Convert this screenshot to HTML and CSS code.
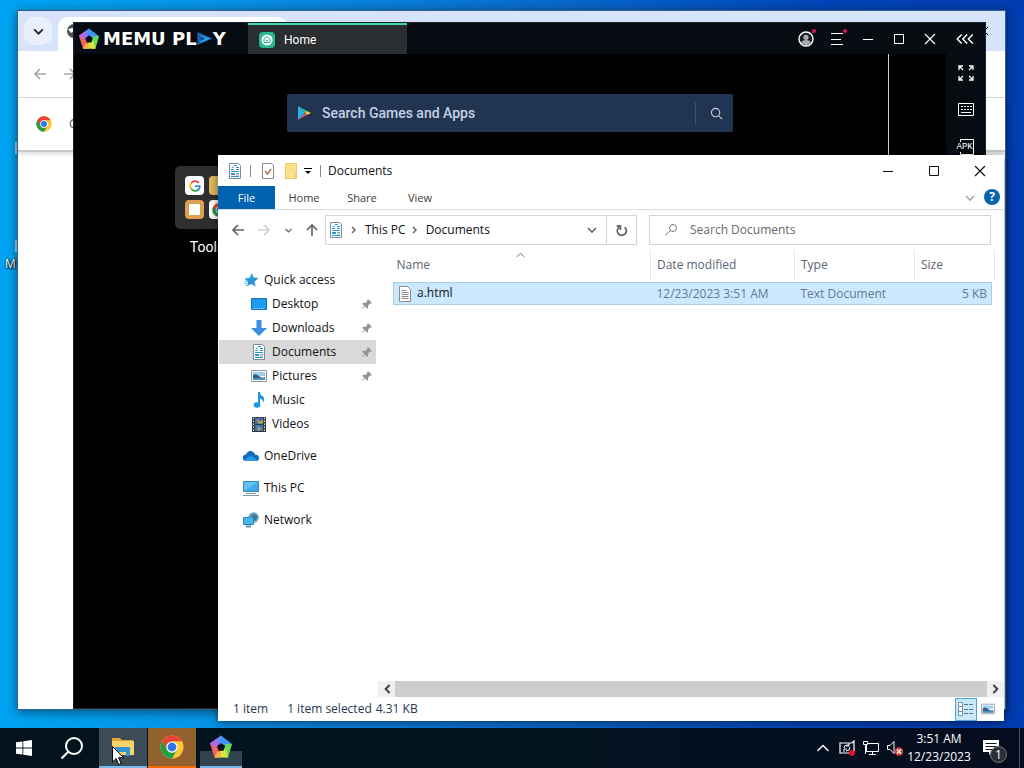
FILE: index.html
```html
<!DOCTYPE html>
<html lang="en">
<head>
    <meta charset="UTF-8">
    <meta name="viewport" content="width=device-width, initial-scale=1.0">
    <title>Desktop</title>
    <link rel="stylesheet" href="styles.css">
</head>
<body>

<!-- Shared icons -->
<svg class="icon-defs" aria-hidden="true">
    <symbol id="i-close" viewBox="0 0 12 12"><path d="M1 1l10 10M11 1L1 11" fill="none" stroke="currentColor" stroke-width="1.2"/></symbol>
    <symbol id="i-max" viewBox="0 0 12 12"><path d="M1.5 1.5h9v9h-9z" fill="none" stroke="currentColor"/></symbol>
    <symbol id="i-min" viewBox="0 0 12 12"><path d="M1 6.500h10" fill="none" stroke="currentColor"/></symbol>
    <symbol id="i-down" viewBox="0 0 12 12"><path d="M2 4l4 4 4-4" fill="none" stroke="currentColor" stroke-width="1.600"/></symbol>
    <symbol id="i-right" viewBox="0 0 12 12"><path d="M4 3l3 3-3 3" fill="none" stroke="currentColor" stroke-width="1.500"/></symbol>
    <symbol id="i-arrow" viewBox="0 0 14 14"><path d="M13 7H2M7 2L2 7l5 5" fill="none" stroke="currentColor" stroke-width="1.700"/></symbol>
    <symbol id="i-search" viewBox="0 0 16 16"><path d="M7.500 8.500L2 13.500" fill="none" stroke="currentColor"/><circle cx="10" cy="6" r="3.500" fill="none" stroke="currentColor"/></symbol>
    <symbol id="i-chrome" viewBox="0 0 24 24">
        <circle cx="12" cy="12" r="11.500" fill="#fcc934"/>
        <path d="M2 6.300L7 15l5-3V6.500z" fill="#1e9e4a"/>
        <path d="M2 6.300A11.500 11.500 0 0 1 22 6.300H12A5.600 5.600 0 0 0 6.800 14.500z" fill="#ea4335"/>
        <path d="M2 6.300L7 15a5.600 5.600 0 0 0 9.800 0L12 23.500A11.500 11.500 0 0 1 2 6.300z" fill="#1e9e4a"/>
        <circle cx="12" cy="12" r="5.600" fill="#fff"/>
        <circle cx="12" cy="12" r="4.400" fill="#2a76e8"/>
    </symbol>
    <symbol id="i-memu" viewBox="0 0 24 24">
        <path d="M12 .5L1 8.500l6.500 4L15 7z" fill="#a07af5"/>
        <path d="M12 .5l11 8.500-5 3.500L8 7z" fill="#3f96f5"/>
        <path d="M23 9l-4 13.500h-3L14 15l3-6z" fill="#6bdc52"/>
        <path d="M19 22.500H5.500L8 16l9-1.500z" fill="#d9e63e"/>
        <path d="M5.500 22.500L1 8.500l6.500 1L11 17z" fill="#f0655e"/>
        <path d="M5.500 22.500l3-6 4 1-1 5z" fill="#f5b34a"/>
        <path d="M1 8.500L7 4l3 4-3 5z" fill="#b467e6"/>
        <path d="M12 8l4 3-1.500 4.800h-5L8 11z" fill="#0b1118"/>
    </symbol>
    <symbol id="i-doc" viewBox="0 0 16 16">
        <path d="M2.500.5h9l2 2v13h-11z" fill="#fff" stroke="#7b8c98"/>
        <path d="M7 2.500h3M4 6.500h3M9 4.500h3M9 6.500h3M4 8.500h8M4 13.500h8" stroke="#2a94cf"/>
        <path d="M4 10h4v2H4z" fill="#2a94cf"/>
        <path d="M9 10.500h3M9 12h3" stroke="#7ea8bf"/>
        <path d="M4.500 5l2-2v2z" fill="#2a94cf"/>
    </symbol>
    <symbol id="i-pic" viewBox="0 0 16 16">
        <path d="M.5 2.500h15v11H.5z" fill="#fff" stroke="#909aa3"/>
        <path d="M2 4h12v4H2z" fill="#9dcff2"/>
        <path d="M2 7q3-2 6 1t6 1v3H2z" fill="#345d80"/>
        <path d="M2 10h12v2H2z" fill="#4a90c0"/>
    </symbol>
    <symbol id="i-pin" viewBox="0 0 12 12">
        <path d="M7 1l4 4-1 .8-1-.2-2 2.200.2 2.200-1 .8L4 8.500 1.500 11 1 10.500 3.500 8 1.200 5.800l.8-1 2.200.2 2.200-2L6.200 2z" fill="#8e969e"/>
    </symbol>
</svg>

<div class="desktop">

    <div class="shortcut">
        <span class="shortcut-art"></span>
        <span class="shortcut-art lower"></span>
        <span class="shortcut-name">MEmu</span>
    </div>

    <!-- Browser -->
    <section class="window browser" aria-label="Browser">
        <div class="browser-tabs">
            <button class="tab-search" aria-label="Search tabs"><svg><use href="#i-down"/></svg></button>
            <div class="browser-tab">
                <svg class="globe" viewBox="0 0 16 16"><circle cx="8" cy="8" r="7" fill="#4a4f54"/><path d="M2 6l5-1 1 3-3 2zM8 2l4 2-2 2zM8 10l4-1-2 4z" fill="#fff"/></svg>
            </div>
            <button class="browser-close" aria-label="Close"><svg><use href="#i-close"/></svg></button>
        </div>
        <div class="browser-bar">
            <button aria-label="Back"><svg><use href="#i-arrow"/></svg></button>
            <button aria-label="Forward"><svg class="flip"><use href="#i-arrow"/></svg></button>
        </div>
        <div class="browser-info">
            <svg><use href="#i-chrome"/></svg>
            <span>Google Chrome</span>
        </div>
        <div class="browser-page"></div>
    </section>

    <!-- Emulator -->
    <section class="window memu" aria-label="MEmu Play">
        <header class="memu-top">
            <div class="memu-brand">
                <svg class="memu-mark"><use href="#i-memu"/></svg>
                <span class="memu-name">MEMU PL<svg class="memu-a" viewBox="0 0 14 12"><path d="M0 0l14 6-14 6z" fill="#1763b8"/><path d="M3 3l9 3-9 4z" fill="#28a3e5"/><path d="M3 4l4 2-4 2z" fill="#0c3b7a"/></svg>Y</span>
            </div>
            <button class="memu-tab">
                <svg viewBox="0 0 16 16"><rect width="16" height="16" rx="4" fill="#28b791"/><circle cx="8" cy="8" r="5.600" fill="#fff"/><path d="M8 4.500l3 2.500v3.500H5V7z" fill="none" stroke="#28b791"/><circle cx="8" cy="8.500" r="1" fill="#28b791"/></svg>
                Home
            </button>
            <div class="memu-tools">
                <button class="dot" aria-label="Account"><svg viewBox="0 0 16 16"><circle cx="8" cy="8" r="7" fill="#1b2027" stroke="#fff" stroke-width="1.400"/><circle cx="8" cy="6.300" r="2.600" fill="#a9adb2"/><path d="M3 12q1-3 5-3t5 3q-5 4-10 0z" fill="#a9adb2"/></svg></button>
                <button class="dot" aria-label="Menu"><svg viewBox="0 0 16 16"><path d="M2 2.500h12M2 8.500h10M2 13.500h12" stroke="#fff"/></svg></button>
                <button aria-label="Minimize"><svg class="small"><use href="#i-min"/></svg></button>
                <button aria-label="Maximize"><svg class="small"><use href="#i-max"/></svg></button>
                <button aria-label="Close"><svg class="small"><use href="#i-close"/></svg></button>
            </div>
            <button class="memu-collapse" aria-label="Collapse"><svg viewBox="0 0 18 12"><path d="M6 2L2 6l4 4M11 2L7 6l4 4M16 2l-4 4 4 4" fill="none" stroke="#fff" stroke-width="1.300"/></svg></button>
        </header>
        <div class="memu-body">
            <div class="memu-screen">
                <label class="game-search">
                    <svg class="play" viewBox="0 0 14 16"><path d="M1 1v14l7-7z" fill="#20b8ea"/><path d="M1 1l9 5-2 2z" fill="#35c08c"/><path d="M10 6l4 2-4 2-2-2z" fill="#fbc62f"/><path d="M1 15l9-5-2-2z" fill="#e84b67"/></svg>
                    <input type="text" placeholder="Search Games and Apps" aria-label="Search Games and Apps">
                    <span class="game-rule"></span>
                    <svg class="lens" viewBox="0 0 14 14"><circle cx="6" cy="6" r="4.500" fill="none" stroke="#c3cddb" stroke-width="1.200"/><path d="M9.500 9.500L13 13" stroke="#c3cddb" stroke-width="1.200"/></svg>
                </label>
                <div class="folder">
                    <div class="folder-box">
                        <span class="app google"><svg viewBox="0 0 16 16"><path d="M12.500 4.500A5.500 5.500 0 0 0 3.500 5" stroke="#ea4335" stroke-width="2" fill="none"/><path d="M3.500 5a5.500 5.500 0 0 0 0 6" stroke="#fbbc05" stroke-width="2" fill="none"/><path d="M3.500 11a5.500 5.500 0 0 0 8.500 1" stroke="#34a853" stroke-width="2" fill="none"/><path d="M8 8h5.500q0 3-2 4.500" stroke="#4285f4" stroke-width="2" fill="none"/></svg></span>
                        <span class="app yellow"></span>
                        <span class="app orange"></span>
                        <span class="app"><svg><use href="#i-chrome"/></svg></span>
                    </div>
                    <span class="folder-name">Tools</span>
                </div>
            </div>
            <aside class="memu-rail">
                <button aria-label="Full screen"><svg viewBox="0 0 18 18"><path d="M2 6V2h4M2 2l4 4M12 2h4v4M16 2l-4 4M2 12v4h4M2 16l4-4M16 12v4h-4M16 16l-4-4" fill="none" stroke="#fff" stroke-width="1.300"/></svg></button>
                <button aria-label="Key mapping"><svg viewBox="0 0 18 18"><path d="M1.500 2.500h15v12h-15z" fill="none" stroke="#fff"/><path d="M4 5.500h11M4 8.500h11" stroke="#fff" stroke-dasharray="2 1"/><path d="M4 11.500h10" stroke="#fff"/></svg></button>
                <button aria-label="Install APK"><svg viewBox="0 0 18 18"><path d="M3.500 4V1.500h13v15H3.500V14" fill="none" stroke="#fff"/></svg><span class="apk">APK</span></button>
            </aside>
        </div>
    </section>

    <!-- File Explorer -->
    <section class="window explorer" aria-label="Documents">
        <header class="title-bar">
            <svg class="ico"><use href="#i-doc"/></svg>
            <span class="bar-rule"></span>
            <svg class="ico" viewBox="0 0 16 16"><path d="M2.500.5h9l2 2v13h-11z" fill="#fdfdfd" stroke="#8a8a8a"/><path d="M5 8l2.500 3L11 6" fill="none" stroke="#b0764e" stroke-width="1.500"/></svg>
            <svg class="ico" viewBox="0 0 16 16"><path d="M2 0h12v15H2z" fill="#fbe08c"/><path d="M12 11h2v4h-2z" fill="#f0c95a"/><path d="M2.500.5h11v15h-11z" fill="none" stroke="#eccb6d"/></svg>
            <svg class="quick-more" viewBox="0 0 8 8"><path d="M0 1.500h8" stroke="#000"/><path d="M1 4h6L4 7z"/></svg>
            <span class="bar-rule last"></span>
            <h1>Documents</h1>
            <div class="caption-buttons">
                <button aria-label="Minimize"><svg><use href="#i-min"/></svg></button>
                <button aria-label="Maximize"><svg><use href="#i-max"/></svg></button>
                <button aria-label="Close"><svg><use href="#i-close"/></svg></button>
            </div>
        </header>

        <nav class="ribbon">
            <button class="file">File</button>
            <button>Home</button>
            <button>Share</button>
            <button>View</button>
            <button class="expand" aria-label="Expand the ribbon"><svg><use href="#i-down"/></svg></button>
            <button class="help" aria-label="Help">?</button>
        </nav>

        <div class="nav-row">
            <div class="nav-buttons">
                <button aria-label="Back"><svg><use href="#i-arrow"/></svg></button>
                <button class="off" aria-label="Forward"><svg class="flip"><use href="#i-arrow"/></svg></button>
                <button class="recent" aria-label="Recent locations"><svg><use href="#i-down"/></svg></button>
                <button aria-label="Up"><svg class="up"><use href="#i-arrow"/></svg></button>
            </div>
            <div class="address">
                <svg class="ico"><use href="#i-doc"/></svg>
                <svg class="crumb"><use href="#i-right"/></svg>
                <a href="#">This PC</a>
                <svg class="crumb"><use href="#i-right"/></svg>
                <a href="#">Documents</a>
                <button class="address-down" aria-label="Previous locations"><svg><use href="#i-down"/></svg></button>
                <button class="refresh" aria-label="Refresh"><svg viewBox="0 0 12 12"><path d="M9 3A4.200 4.200 0 1 1 4 2.700M1.500 1.800H5V5.500" fill="none" stroke="#666" stroke-width="1.600"/></svg></button>
            </div>
            <label class="search-box">
                <svg><use href="#i-search"/></svg>
                <input type="text" placeholder="Search Documents" aria-label="Search Documents">
            </label>
        </div>

        <div class="content">
            <nav class="sidebar">
                <a href="#" class="root"><svg viewBox="0 0 16 16"><path d="M9 1l1.500 4.500 5 .5-4 3.500 1 5L8.500 12 4 14l1-4-3.500-3.500 5-.5z" fill="#2a94dc"/><path d="M1 9l3 1M1 12l3-1M2 14l3-2" stroke="#7cc0ea"/></svg>Quick access</a>
                <a href="#"><svg viewBox="0 0 16 16"><path d="M.5 2.500h15v11H.5z" fill="#1d9bf0" stroke="#1377bd"/><path d="M2 12.500h12" stroke="#9bd3f8" stroke-dasharray="1 1"/></svg>Desktop<svg class="pin"><use href="#i-pin"/></svg></a>
                <a href="#"><svg viewBox="0 0 16 16"><path d="M5.500 0h5v8H16l-8 8-8-8h5.500z" fill="#3a8ee0"/></svg>Downloads<svg class="pin"><use href="#i-pin"/></svg></a>
                <a href="#" class="selected"><svg><use href="#i-doc"/></svg>Documents<svg class="pin"><use href="#i-pin"/></svg></a>
                <a href="#"><svg><use href="#i-pic"/></svg>Pictures<svg class="pin"><use href="#i-pin"/></svg></a>
                <a href="#"><svg viewBox="0 0 16 16"><path d="M7 0h2q0 3 3 4.500 2.500 2.500 0 6 0-3.500-3-4V13H7z" fill="#1d96e8"/><ellipse cx="6" cy="13" rx="3.400" ry="2.700" fill="#1d96e8"/></svg>Music</a>
                <a href="#"><svg viewBox="0 0 16 16"><path d="M1 1h14v15H1z" fill="#37393c"/><path d="M2.500 1.500v14M13.500 1.500v14" stroke="#e5e5e5" stroke-dasharray="1.500 1.500"/><path d="M4 2h8v6H4z" fill="#3e6fb8"/><path d="M4 9h8v6H4z" fill="#3477cc"/><path d="M5 3l4 2 3-1v3l-4 1zM6 10l5 3-4 2z" fill="#b8a23c"/></svg>Videos</a>
                <a href="#" class="root gap"><svg viewBox="0 0 16 16"><path d="M3 13a3.200 3.200 0 0 1 0-6.400q2-5 6.500-3 2 1 2.500 3 4 .5 4 3.400 0 3-3 3z" fill="#0f6cbd"/><path d="M1 11.500l7-4 7 5.200-2 .3H3z" fill="#259be8"/></svg>OneDrive</a>
                <a href="#" class="root gap"><svg viewBox="0 0 16 16"><path d="M.5 1.500h15v10H.5z" fill="#5fc3f3" stroke="#3b86b0"/><path d="M1 11l14-9v9z" fill="#3eaee8"/><path d="M3 13.500h10M0 15.500h16" stroke="#8295a2"/></svg>This PC</a>
                <a href="#" class="root gap"><svg viewBox="0 0 16 16"><circle cx="10.500" cy="5.500" r="5.200" fill="#6ea8cf"/><path d="M8 3l4-1 3 3-3 4z" fill="#41749a"/><path d="M.5 5.500h10v7H.5z" fill="#45b6ee" stroke="#2f83b6"/><path d="M3 14.500h5" stroke="#5d8eaa" stroke-width="2"/></svg>Network</a>
            </nav>

            <main class="files">
                <svg class="sort" viewBox="0 0 10 6"><path d="M1 5l4-4 4 4" fill="none" stroke="#555"/></svg>
                <table>
                    <colgroup>
                        <col>
                        <col class="col-date">
                        <col class="col-type">
                        <col class="col-size">
                        <col class="col-end">
                    </colgroup>
                    <thead>
                        <tr><th>Name</th><th>Date modified</th><th>Type</th><th colspan="2">Size</th></tr>
                    </thead>
                    <tbody>
                        <tr>
                            <td class="name"><svg class="ico" viewBox="0 0 16 16"><path d="M2.500.5h8l3 3v12h-11z" fill="#fff" stroke="#8b8b8b"/><path d="M4.500 4.500h5M4.500 6.500h7M4.500 8.500h7M4.500 10.500h7M4.500 12.500h7" stroke="#8a8a8a"/></svg>a.html</td>
                            <td>12/23/2023 3:51 AM</td>
                            <td>Text Document</td>
                            <td class="size">5 KB</td>
                            <td class="end"></td>
                        </tr>
                    </tbody>
                </table>
                <div class="scrollbar">
                    <button aria-label="Scroll left"><svg class="flip"><use href="#i-right"/></svg></button>
                    <span class="thumb"></span>
                    <button aria-label="Scroll right"><svg><use href="#i-right"/></svg></button>
                </div>
            </main>
        </div>

        <footer class="status">
            <span>1 item</span>
            <span class="picked">1 item selected</span>
            <span>4.31 KB</span>
            <div class="views">
                <button class="on" aria-label="Details"><svg viewBox="0 0 16 16"><path d="M.5 1.500h4v13h-4zM.5 5.500h4M.5 10.500h4" fill="#fff" stroke="#7a94a6"/><path d="M6 3.500h10M6 8.500h10M6 12.500h10" stroke="#5c7485" stroke-dasharray="4 1"/></svg></button>
                <button aria-label="Large icons"><svg><use href="#i-pic"/></svg></button>
            </div>
        </footer>
    </section>
</div>

<!-- Taskbar -->
<footer class="taskbar">
    <button aria-label="Start"><svg class="start" viewBox="0 0 16 16"><path d="M0 2.300l6.500-.9v6.200H0zM7.300 1.300L16 0v7.600H7.300zM0 8.400h6.500v6.200L0 13.700zM7.300 8.400H16V16l-8.700-1.300z" fill="#fff"/></svg></button>
    <button aria-label="Search"><svg viewBox="0 0 24 24"><circle cx="14" cy="10" r="8" fill="none" stroke="#fff" stroke-width="2"/><path d="M8.500 15.500L1.500 22.500" stroke="#fff" stroke-width="2.200"/></svg></button>
    <button class="task hot" aria-label="File Explorer">
        <svg viewBox="0 0 24 24"><path d="M1 3h8l2 2h11v3H1z" fill="#e0a42b"/><path d="M1 6h22v14H1z" fill="#f8d36b"/><path d="M4 12h15v9h-4v-4H8v4H4z" fill="#3793d1"/></svg>
        <svg class="cursor" viewBox="0 0 12 19"><path d="M.5.5v15.500l3.700-3.500 2.500 6 2.400-1-2.500-5.800h5z" fill="#fff" stroke="#000"/></svg>
    </button>
    <button class="task alert" aria-label="Google Chrome"><svg><use href="#i-chrome"/></svg></button>
    <button class="task small" aria-label="MEmu"><svg><use href="#i-memu"/></svg></button>
    <div class="tray">
        <button aria-label="Show hidden icons"><svg viewBox="0 0 16 16"><path d="M2.500 11L8 5.500l5.500 5.500" fill="none" stroke="#fff" stroke-width="1.300"/></svg></button>
        <button aria-label="Updates"><svg viewBox="0 0 16 16"><path d="M1 3h12l2-2v12H1z" fill="none" stroke="#fff" stroke-width="1.200"/><path d="M5 8q0-3 3-3h2M10 3v3H7M11 7q0 4-4 4M5 12V9h3" fill="none" stroke="#fff"/><circle cx="13" cy="13" r="3" fill="#e81123"/></svg></button>
        <button aria-label="Network"><svg viewBox="0 0 16 16"><path d="M3.500 3.500h12v8h-12zM9.500 12v3M6 14.500h7" fill="none" stroke="#fff"/><path d="M.5 1.500h4v3h-4zM2.500 5v9" fill="#08111f" stroke="#fff"/></svg></button>
        <button aria-label="Volume"><svg viewBox="0 0 16 16"><path d="M.5 5.500H3l4-4v12l-4-4H.5z" fill="none" stroke="#fff"/><circle cx="12" cy="11.500" r="4.300" fill="#d3423a"/><path d="M10 9.500l4 4M14 9.500l-4 4" stroke="#fff" stroke-width="1.200"/></svg></button>
        <div class="clock"><span>3:51 AM</span><span>12/23/2023</span></div>
        <button class="notes" aria-label="Notifications"><svg viewBox="0 0 16 16"><path d="M0 0h16v12H9l-3 3v-3H0z" fill="#fff"/><path d="M2.500 3.500h11M2.500 6.500h11M2.500 9.500h7" stroke="#0a1220"/></svg><span class="badge">1</span></button>
        <span class="show-desktop"></span>
    </div>
</footer>

</body>
</html>
```
FILE: styles.css
```css
* {
    box-sizing: border-box;
}

body {
    font-family: "Open Sans", "Noto Sans", sans-serif;
    font-size: 12px;
    line-height: 16px;
    margin: 0;
    height: 100vh;
    display: flex;
    flex-direction: column;
    overflow: hidden;
}

button {
    display: flex;
    align-items: center;
    justify-content: center;
    padding: 0;
    border: none;
    background: none;
    font: inherit;
    color: inherit;
}

input {
    flex: 1;
    min-width: 0;
    padding: 0;
    border: none;
    outline: none;
    background: none;
    font: inherit;
}

a {
    color: inherit;
    text-decoration: none;
}

svg {
    display: block;
    flex: none;
    width: 16px;
    height: 16px;
}

.icon-defs {
    position: absolute;
    width: 0;
    height: 0;
}

.flip {
    transform: rotate(180deg);
}

.up {
    transform: rotate(90deg);
}

.desktop {
    position: relative;
    flex: 1;
    overflow: hidden;
    background: linear-gradient(to right, #00a4f4 0%, #0894e6 20%, #0a6fd0 50%, #0046ba 80%, #003db2 100%);
}

.window {
    position: absolute;
    display: flex;
    flex-direction: column;
}

/* Desktop shortcut */
.shortcut {
    position: absolute;
    top: 142px;
    left: 5px;
    color: #fff;
}

.shortcut-art {
    display: block;
    width: 3px;
    height: 12px;
    margin-left: 10px;
    background: #9fd3f3;
}

.shortcut-art.lower {
    margin-top: 86px;
}

.shortcut-name {
    display: block;
    margin-top: 4px;
    text-shadow: 1px 1px 2px #000, 0 0 2px #000;
}

/* Browser */
.browser {
    top: 10px;
    right: 18px;
    bottom: 18px;
    left: 17px;
    border: 1px solid #35618c;
    background: #fff;
    box-shadow: 0 2px 10px rgba(0, 0, 0, 0.5);
}

.browser-tabs {
    display: flex;
    height: 40px;
    padding: 6px 6px 0;
    background: #d7e3fb;
}

.tab-search {
    width: 28px;
    height: 28px;
    border-radius: 10px;
    background: #e9effc;
    color: #1f2328;
}

.tab-search svg {
    width: 13px;
    height: 13px;
}

.browser-tab {
    width: 230px;
    margin-left: 6px;
    padding: 6px 8px;
    border-radius: 10px 10px 0 0;
    background: #fff;
}

.browser-close {
    width: 30px;
    height: 28px;
    margin-left: auto;
}

.browser-close svg {
    width: 10px;
    height: 10px;
}

.browser-bar {
    display: flex;
    gap: 16px;
    height: 47px;
    padding-left: 15px;
    border-bottom: 1px solid #d5d7da;
    border-radius: 0 8px 0 0;
    color: #a3a5a8;
}

.browser-bar svg {
    width: 14px;
    height: 14px;
}

.browser-info {
    display: flex;
    align-items: center;
    gap: 17px;
    height: 54px;
    padding-left: 18px;
    border-bottom: 2px solid #c9c9c9;
    box-shadow: 0 2px 4px rgba(0, 0, 0, 0.15);
    color: #555;
}

/* Emulator */
.memu {
    top: 22px;
    right: 38px;
    bottom: 19px;
    left: 73px;
    border: 1px solid #1b2229;
    background: #000;
    color: #fff;
    font-family: Roboto, sans-serif;
}

.memu-top {
    display: flex;
    height: 31px;
    background: #070b12;
}

.memu-brand {
    display: flex;
    align-items: center;
    width: 174px;
    padding-left: 4px;
    gap: 3px;
}

.memu-mark {
    width: 22px;
    height: 22px;
}

.memu-name {
    display: flex;
    align-items: center;
    font-family: "DejaVu Sans", sans-serif;
    font-size: 18px;
    font-weight: bold;
    white-space: pre;
}

.memu-a {
    width: 16px;
    height: 13px;
}

.memu-tab {
    justify-content: flex-start;
    gap: 9px;
    width: 159px;
    padding-left: 11px;
    border-top: 2px solid #3ed5a9;
    background: #2a2e31;
    font-size: 12px;
}

.memu-tools {
    display: flex;
    gap: 15px;
    margin-left: auto;
}

.memu-tools button,
.memu-collapse {
    position: relative;
    width: 16px;
}

.memu-tools .small {
    width: 12px;
    height: 12px;
}

.dot::after {
    content: "";
    position: absolute;
    top: 6px;
    right: -2px;
    width: 4px;
    height: 4px;
    border-radius: 50%;
    background: #d81b50;
}

.memu-collapse {
    width: 40px;
    margin-left: 7px;
}

.memu-collapse svg {
    width: 20px;
    height: 14px;
}

.memu-body {
    display: flex;
    flex: 1;
}

.memu-screen {
    flex: 1;
    margin-right: 57px;
    border-right: 1px solid #d0d0d0;
}

.memu-rail {
    display: flex;
    flex-direction: column;
    align-items: center;
    gap: 19px;
    width: 39px;
    padding-top: 10px;
    background: #070b12;
}

.memu-rail button {
    position: relative;
}

.memu-rail svg {
    width: 18px;
    height: 18px;
}

.apk {
    position: absolute;
    top: 5px;
    left: 0;
    background: #070b12;
    font-family: "Liberation Mono", monospace;
    font-size: 9px;
    line-height: 8px;
}

.game-search {
    display: flex;
    align-items: center;
    max-width: 446px;
    height: 38px;
    margin: 40px auto 0 213px;
    padding: 0 10px;
    border-radius: 2px;
    background: #213452;
    font-size: 14px;
    font-weight: 500;
}

.play {
    width: 14px;
    margin-right: 11px;
}

.game-search input::placeholder {
    color: #c4d1e2;
    opacity: 1;
}

.game-rule {
    width: 1px;
    height: 22px;
    margin-right: 14px;
    background: #3d5373;
}

.lens {
    width: 13px;
    height: 13px;
}

.folder {
    width: 64px;
    margin: 34px 0 0 101px;
    text-align: center;
}

.folder-box {
    display: grid;
    grid-template-columns: 19px 19px;
    gap: 5px;
    height: 63px;
    padding: 10px;
    border-radius: 5px;
    background: #302f30;
}

.app {
    display: flex;
    align-items: center;
    justify-content: center;
    width: 19px;
    height: 19px;
    border-radius: 4px;
    background: #fff;
}

.app svg {
    width: 14px;
    height: 14px;
}

.app.yellow {
    background: #ddba5e;
}

.app.orange {
    border: 4px solid #dda052;
}

.folder-name {
    display: block;
    margin-top: 10px;
    font-size: 14px;
}

/* File Explorer */
.explorer {
    top: 155px;
    right: 20px;
    bottom: 7px;
    left: 218px;
    background: #fff;
    box-shadow: 0 2px 8px rgba(0, 0, 0, 0.5);
    color: #111;
}

.title-bar {
    display: flex;
    align-items: center;
    height: 31px;
    padding-left: 9px;
}

.title-bar h1 {
    margin: 0 0 0 7px;
    font-size: 12px;
    font-weight: normal;
}

.title-bar .ico + .ico {
    margin-left: 7px;
}

.bar-rule {
    width: 1px;
    height: 12px;
    margin: 0 9px 0 7px;
    background: #888;
}

.bar-rule.last {
    margin: 0 0 0 8px;
}

.quick-more {
    width: 8px;
    height: 8px;
    margin-left: 5px;
}

.caption-buttons {
    display: flex;
    margin-left: auto;
    padding-right: 1px;
    height: 31px;
}

.caption-buttons button {
    width: 46px;
}

.caption-buttons svg {
    width: 12px;
    height: 12px;
}

.ribbon {
    display: flex;
    height: 24px;
    border-bottom: 1px solid #dadbdc;
    font-size: 11px;
    color: #3c3c3c;
}

.ribbon button {
    width: 58px;
}

.ribbon .file {
    width: 57px;
    background: #0063b1;
    color: #fff;
}

.ribbon .expand {
    width: 22px;
    margin-left: auto;
    color: #a8a8a8;
}

.expand svg {
    width: 12px;
    height: 12px;
}

.ribbon .help {
    width: 16px;
    height: 16px;
    margin: 3px 4px 0 3px;
    border-radius: 50%;
    background: #0a63b0;
    color: #fff;
    font-size: 12px;
    font-weight: bold;
}

.nav-row {
    display: flex;
    padding: 5px 13px 0;
}

.nav-buttons {
    display: flex;
    flex: none;
    align-items: center;
    justify-content: space-between;
    width: 88px;
    margin-right: 6px;
    color: #666;
}

.nav-buttons svg {
    width: 14px;
    height: 14px;
}

.nav-buttons .recent svg {
    width: 9px;
    height: 9px;
}

.nav-buttons .off {
    color: #d0d0d0;
}

.address {
    display: flex;
    align-items: center;
    flex: 1 1 312px;
    height: 30px;
    margin-right: 12px;
    padding-left: 2px;
    border: 1px solid #d4d4d4;
}

.crumb {
    width: 12px;
    height: 12px;
    margin: 0 5px 0 4px;
    color: #666;
}

.address a + .crumb {
    margin-left: 3px;
}

.address-down {
    margin-left: auto;
    width: 28px;
    color: #666;
}

.address-down svg {
    width: 12px;
    height: 12px;
}

.refresh {
    width: 30px;
    height: 28px;
    border-left: 1px solid #d4d4d4;
}

.refresh svg {
    width: 13px;
    height: 13px;
}

.search-box {
    display: flex;
    align-items: center;
    flex: 1 1 342px;
    gap: 11px;
    height: 30px;
    padding-left: 13px;
    border: 1px solid #d4d4d4;
    color: #777;
}

.search-box input::placeholder {
    color: #686868;
    opacity: 1;
}

.content {
    display: flex;
    flex: 1;
    min-height: 0;
}

.sidebar {
    width: 158px;
    padding-top: 23px;
}

.sidebar a {
    display: flex;
    align-items: center;
    gap: 5px;
    height: 24px;
    padding: 0 3px 0 33px;
}

.sidebar .root {
    padding-left: 25px;
}

.sidebar .gap {
    margin-top: 8px;
}

.sidebar .selected {
    margin-left: 1px;
    padding-left: 32px;
    background: #d9d9d9;
}

.sidebar .pin {
    width: 12px;
    height: 12px;
    margin-left: auto;
}

.files {
    position: relative;
    display: flex;
    flex-direction: column;
    flex: 1;
    margin-left: 2px;
}

.sort {
    position: absolute;
    top: 7px;
    left: 138px;
    width: 9px;
    height: 6px;
}

.files table {
    width: calc(100% - 24px);
    margin: 5px 9px 0 15px;
    border-collapse: collapse;
    table-layout: fixed;
}

.col-date {
    width: 144px;
}

.col-type {
    width: 120px;
}

.col-size {
    width: 77px;
}

.col-end {
    width: 3px;
}

.files th {
    height: 30px;
    padding: 0 6px;
    border-right: 1px solid #e5e5e5;
    color: #5a6675;
    font-weight: normal;
    text-align: left;
}

.files th:first-child {
    padding-left: 3px;
}

.files thead::after {
    content: "";
    display: block;
    height: 2px;
}

.files td {
    height: 22px;
    padding: 0 6px;
    border: solid #a5cfea;
    border-width: 1px 0;
    background: #cce8ff;
    color: #667a8c;
}

.files .name {
    padding: 0 3px;
    border-left-width: 1px;
    color: #111;
}

.name .ico {
    display: inline-block;
    margin-right: 4px;
    vertical-align: middle;
}

.files .size {
    padding-right: 4px;
    border-right-width: 1px;
    text-align: right;
}

.files .end {
    padding: 0;
    border: none;
    background: none;
}

.scrollbar {
    display: flex;
    height: 16px;
    margin-top: auto;
    background: #f0f0f0;
    color: #444;
}

.scrollbar button {
    width: 17px;
}

.scrollbar .thumb {
    flex: 1;
    background: #cdcdcd;
}

.status {
    display: flex;
    align-items: center;
    height: 24px;
    padding: 0 5px 0 15px;
    color: #2a3554;
}

.picked {
    margin: 0 4px 0 19px;
}

.views {
    display: flex;
    margin-left: auto;
}

.views button {
    width: 22px;
    height: 23px;
}

.views .on {
    border: 1px solid #4aa5d8;
    background: #c7e8f8;
}

.views button:last-child svg {
    width: 14px;
    height: 14px;
}

/* Taskbar */
.taskbar {
    display: flex;
    height: 40px;
    background: linear-gradient(to right, #02131e, #021420 50%, #050c1e);
    color: #fff;
}

.taskbar button {
    width: 48px;
}

.taskbar svg {
    width: 24px;
    height: 24px;
}

.taskbar .start {
    width: 16px;
    height: 16px;
}

.taskbar .task {
    position: relative;
    margin-left: 1px;
    border-bottom: 2px solid #76b9ed;
}

.task.hot {
    background: #3c4d58;
}

.taskbar .task.hot {
    margin-left: 3px;
}

.taskbar .task.alert {
    border-color: #ff6a00;
    background: #93602f;
}

.taskbar .task.small {
    width: 42px;
    margin-left: 4px;
    background: linear-gradient(transparent 23px, #33434d 23px);
}

.taskbar .cursor {
    position: absolute;
    top: 18px;
    left: 13px;
    width: 12px;
    height: 19px;
}

.tray {
    display: flex;
    align-items: center;
    margin-left: auto;
}

.tray button {
    width: 24px;
}

.tray svg {
    width: 16px;
    height: 16px;
}

.clock {
    display: flex;
    flex-direction: column;
    align-items: center;
    width: 64px;
    line-height: 18px;
}

.tray .notes {
    position: relative;
    width: 48px;
    padding-right: 8px;
}

.badge {
    position: absolute;
    top: 6px;
    right: 12px;
    width: 17px;
    height: 17px;
    border: 1px solid #777;
    border-radius: 50%;
    background: #2b2f36;
    line-height: 15px;
}

.show-desktop {
    width: 5px;
    height: 40px;
    border-left: 1px solid #4a5260;
}
```
